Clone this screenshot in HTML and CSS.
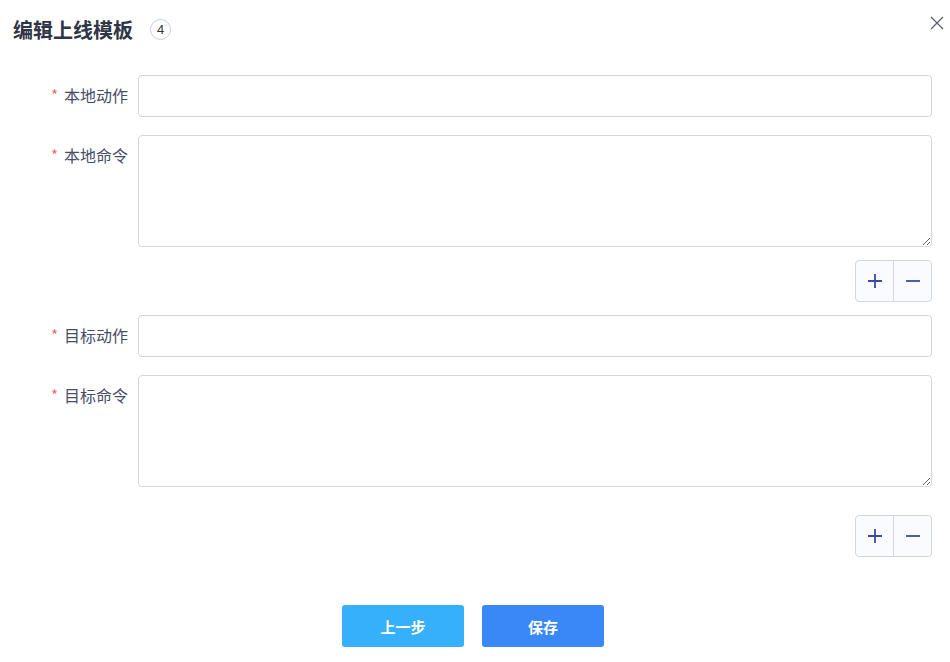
FILE: index.html
```html
<!DOCTYPE html>
<html lang="zh">
<head>
  <meta charset="UTF-8" />
  <title>编辑上线模板</title>
  <link rel="stylesheet" href="styles.css">
</head>
<body>
  <div class="dialog">
    <header>
      <h2>编辑上线模板</h2>
      <span class="badge">4</span>
      <span class="close">
        <svg width="14" height="14" viewBox="0 0 14 14"><path d="M1 1 L13 13 M13 1 L1 13" stroke="#5b6272" stroke-width="1.3" fill="none"/></svg>
      </span>
    </header>
    <form>
      <div class="group">
        <div class="form-item">
          <label><span class="req">*</span>本地动作</label>
          <input type="text">
        </div>
        <div class="form-item">
          <label><span class="req">*</span>本地命令</label>
          <textarea></textarea>
        </div>
        <div class="ops">
          <button type="button" class="op"><svg width="16" height="16" viewBox="0 0 16 16"><path d="M8 1 V15 M1 8 H15" stroke="#3a4aa0" stroke-width="1.8"/></svg></button><button type="button" class="op"><svg width="16" height="16" viewBox="0 0 16 16"><path d="M1 8 H15" stroke="#3a4aa0" stroke-width="1.8"/></svg></button>
        </div>
      </div>
      <div class="group">
        <div class="form-item">
          <label><span class="req">*</span>目标动作</label>
          <input type="text">
        </div>
        <div class="form-item">
          <label><span class="req">*</span>目标命令</label>
          <textarea></textarea>
        </div>
        <div class="ops last">
          <button type="button" class="op"><svg width="16" height="16" viewBox="0 0 16 16"><path d="M8 1 V15 M1 8 H15" stroke="#3a4aa0" stroke-width="1.8"/></svg></button><button type="button" class="op"><svg width="16" height="16" viewBox="0 0 16 16"><path d="M1 8 H15" stroke="#3a4aa0" stroke-width="1.8"/></svg></button>
        </div>
      </div>
      <div class="footer">
        <button type="button" class="btn prev">上一步</button>
        <button type="button" class="btn save">保存</button>
      </div>
    </form>
  </div>
</body>
</html>
```

FILE: styles.css
```css
body {
  margin: 0;
  background: #fff;
  font-family: "Noto Sans CJK SC", "Noto Sans", sans-serif;
  color: #3c4257;
}

.dialog {
  width: 950px;
  height: 662px;
  overflow: hidden;
}

header {
  display: flex;
  align-items: center;
  height: 58px;
  padding-left: 13px;
  position: relative;
}

header h2 {
  margin: 0;
  font-size: 20px;
  font-weight: 700;
  color: #2f3547;
}

.badge {
  margin-left: 17px;
  width: 19px;
  height: 19px;
  border: 1px solid #c9cde0;
  border-radius: 50%;
  font-size: 13px;
  line-height: 19px;
  text-align: center;
  color: #333;
  font-family: "Liberation Sans", sans-serif;
}

.close {
  position: absolute;
  right: 6px;
  top: 11px;
  width: 14px;
  height: 14px;
}

form {
  padding-top: 17px;
  padding-right: 18px;
}

.form-item {
  display: flex;
  margin-bottom: 18px;
}

.form-item label {
  flex: 0 0 138px;
  height: 42px;
  padding-right: 10px;
  box-sizing: border-box;
  text-align: right;
  font-size: 16px;
  line-height: 40px;
  color: #464d68;
  overflow: hidden;
}

.req {
  color: #f56c6c;
  font-size: 15px;
  margin-right: 6px;
  vertical-align: top;
}

.form-item input,
.form-item textarea {
  flex: 1;
  min-width: 0;
  box-sizing: border-box;
  border: 1px solid #d3d6e6;
  border-radius: 4px;
  background: #fff;
  font-family: inherit;
  font-size: 14px;
  outline: none;
}

.form-item input {
  height: 42px;
  padding: 0 12px;
}

.form-item textarea {
  height: 112px;
  padding: 8px 12px;
}

.ops {
  display: flex;
  justify-content: flex-end;
  margin-top: -5px;
  margin-bottom: 13px;
}

.ops.last {
  margin-top: 28px;
  margin-bottom: 0;
}

.op {
  width: 39px;
  height: 42px;
  border: 1px solid #d3d6e6;
  background: #fafbfe;
  padding: 0;
  display: flex;
  align-items: center;
  justify-content: center;
  cursor: pointer;
}

.op:first-child {
  border-radius: 4px 0 0 4px;
}

.op:last-child {
  border-radius: 0 4px 4px 0;
  margin-left: -1px;
}

.footer {
  display: flex;
  justify-content: center;
  gap: 18px;
  margin-top: 48px;
  margin-right: -14px;
}

.btn {
  width: 122px;
  height: 42px;
  border: none;
  border-radius: 3px;
  color: #fff;
  font-size: 15px;
  font-weight: 700;
  font-family: inherit;
  cursor: pointer;
}

.prev {
  background: #37b0fb;
}

.save {
  background: #3a87f8;
}
```
